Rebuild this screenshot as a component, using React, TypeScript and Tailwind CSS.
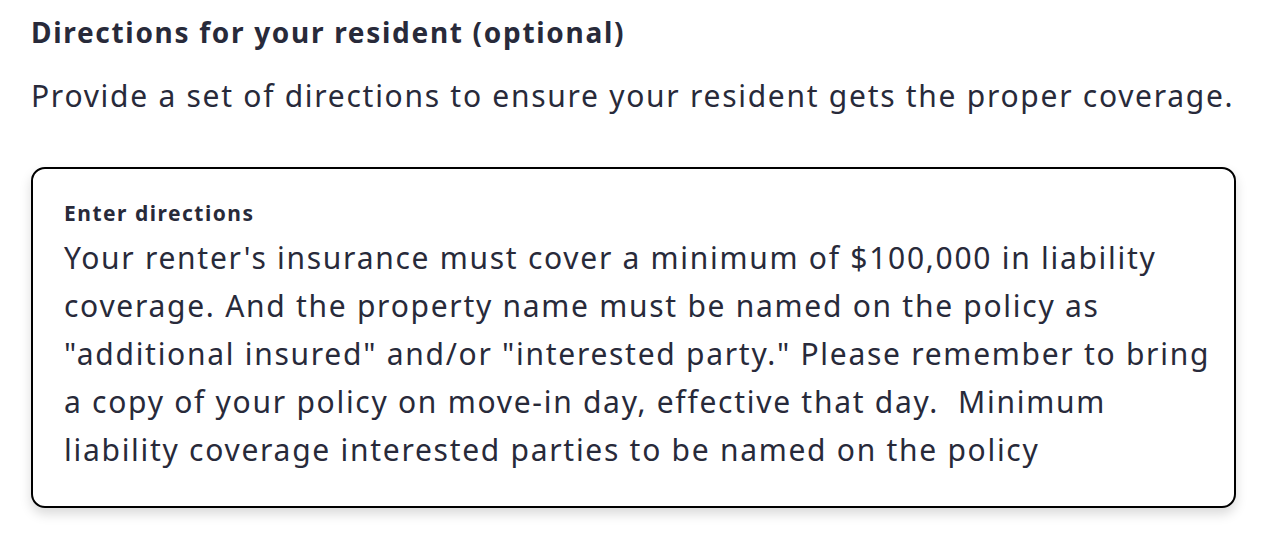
export default function App() {
  const lines = [
    "Your renter's insurance must cover a minimum of $100,000 in liability",
    "coverage. And the property name must be named on the policy as",
    "\"additional insured\" and/or \"interested party.\" Please remember to bring",
    "a copy of your policy on move-in day, effective that day.\u00a0 Minimum",
    "liability coverage interested parties to be named on the policy",
  ];

  return (
    <div className="min-h-[542px] bg-white px-[31px] pt-[12px] text-[#282a3a] [font-family:'Noto_Sans',sans-serif]">
      <h2 className="whitespace-nowrap text-[28px] font-bold leading-[40px] tracking-[1.7px]">
        Directions for your resident (optional)
      </h2>
      <p className="mt-[24px] whitespace-nowrap text-[30px] leading-[40px] tracking-[1.72px]">
        Provide a set of directions to ensure your resident gets the proper coverage.
      </p>

      <div className="mt-[51px] w-[1205px] rounded-[14px] border-2 border-black bg-white px-[31px] pt-[30px] pb-[32px] shadow-[0_6px_12px_rgba(0,0,0,0.15)]">
        <label className="block whitespace-nowrap text-[21px] font-bold leading-[28px] tracking-[1.5px]">
          Enter directions
        </label>
        <div className="mt-[7px] text-[30px] leading-[48px] tracking-[1.72px]">
          {lines.map((l) => (
            <div key={l} className="whitespace-pre">
              {l}
            </div>
          ))}
        </div>
      </div>
    </div>
  );
}
